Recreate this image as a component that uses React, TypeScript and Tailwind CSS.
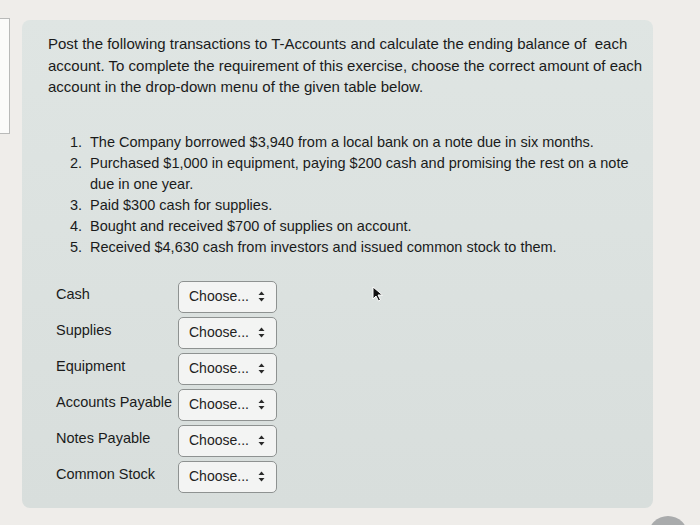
import React from 'react';

const transactions = [
	'The Company borrowed $3,940 from a local bank on a note due in six months.',
	'Purchased $1,000 in equipment, paying $200 cash and promising the rest on a note due in one year.',
	'Paid $300 cash for supplies.',
	'Bought and received $700 of supplies on account.',
	'Received $4,630 cash from investors and issued common stock to them.'
];

const accounts = ['Cash', 'Supplies', 'Equipment', 'Accounts Payable', 'Notes Payable', 'Common Stock'];

const Arrows = () => (
	<svg width="7" height="11" viewBox="0 0 7 11" className="ml-auto mr-[1px]">
		<path d="M3.5 0.5 L6.5 4 L0.5 4 Z" fill="#2a2a2a" />
		<path d="M3.5 10.5 L6.5 7 L0.5 7 Z" fill="#2a2a2a" />
	</svg>
);

const Cursor = () => (
	<svg width="12" height="16" viewBox="0 0 12 16" className="absolute left-[372px] top-[286px]">
		<path d="M1 1 L1 13 L4 10 L6.5 15 L8.5 14 L6 9 L10.5 9 Z" fill="#111" stroke="#fff" strokeWidth="1" />
	</svg>
);

const App = () => {
	return (
		<div className="relative w-[700px] h-[525px] overflow-hidden bg-[#efedea] font-['Liberation_Sans',Arial,sans-serif] text-[#1a1b1b]">
			{/* piece of a box on the left edge */}
			<div className="absolute left-0 top-[18px] w-[10px] h-[116px] bg-[#fbfbfa] border border-l-0 border-[#b9bab9]" />

			<div className="ml-[22px] mt-[20px] w-[631px] h-[488px] rounded-lg bg-gradient-to-b from-[#dfe5e3] to-[#d8dedc] pl-[26px] pt-[13px]">
				<p className="w-[596px] text-[15px] leading-[21.5px]">
					Post the following transactions to T-Accounts and calculate the ending balance of&nbsp; each
					account. To complete the requirement of this exercise, choose the correct amount of each
					account in the drop-down menu of the given table below.
				</p>

				<ol className="mt-[34px] ml-[8px] w-[586px] text-[14.5px] leading-[21px]">
					{transactions.map((t, i) => (
						<li key={i} className="flex">
							<span className="w-[26px] mr-[8px] shrink-0 text-right">{i + 1}.</span>
							<span>{t}</span>
						</li>
					))}
				</ol>

				<div className="mt-[23px] ml-[8px] flex flex-col gap-[4px]">
					{accounts.map((a) => (
						<div key={a} className="flex items-center h-[32px]">
							<div className="w-[122px] text-[14.5px] -mt-[4px] whitespace-nowrap">{a}</div>
							<div className="flex items-center w-[99px] h-[32px] rounded-[5px] border border-[#8e9291] bg-[#f3f4f3] pl-[10px] pr-[10px] text-[14px] text-[#222]">
								Choose...
								<Arrows />
							</div>
						</div>
					))}
				</div>
			</div>

			<Cursor />
			<div className="absolute left-[648px] top-[516px] w-[40px] h-[40px] rounded-full bg-[#a9abac]" />
		</div>
	);
};

export default App;
